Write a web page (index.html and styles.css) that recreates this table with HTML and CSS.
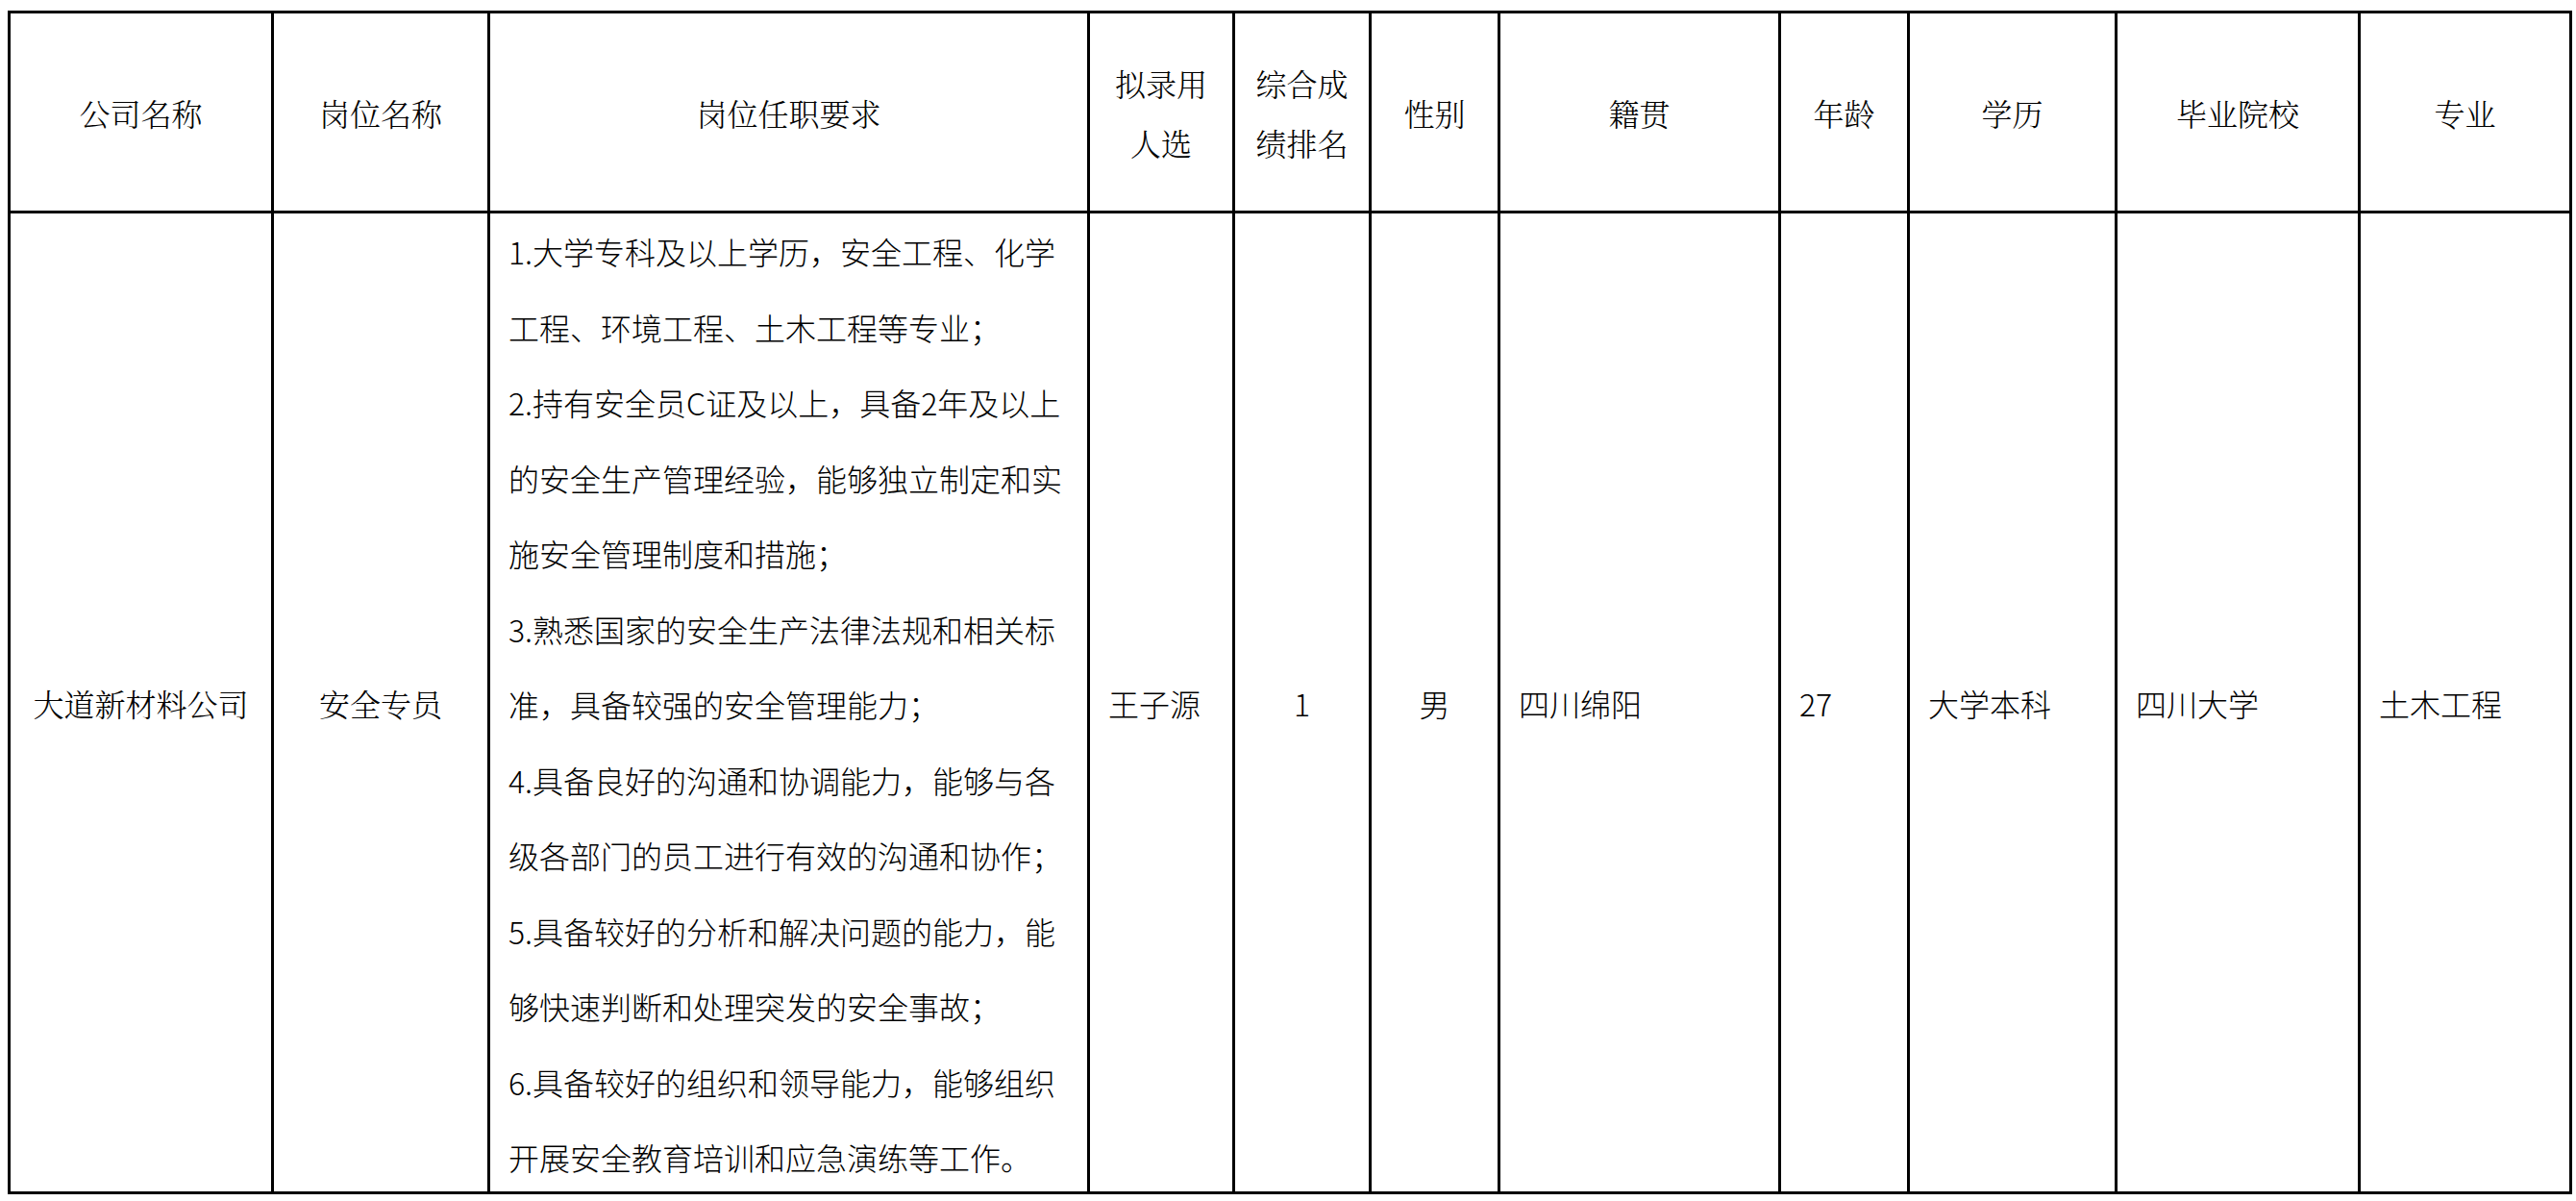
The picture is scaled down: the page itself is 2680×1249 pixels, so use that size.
FILE: index.html
```html
<!DOCTYPE html>
<html lang="zh-CN">
<head>
<meta charset="utf-8">
<title>拟录用人员名单</title>
<link rel="stylesheet" href="styles.css">
</head>
<body>
<div class="sheet">
  <div class="grid">
    <div class="cell head">公司名称</div>
    <div class="cell head">岗位名称</div>
    <div class="cell head">岗位任职要求</div>
    <div class="cell head two">拟录用<br>人选</div>
    <div class="cell head two">综合成<br>绩排名</div>
    <div class="cell head">性别</div>
    <div class="cell head">籍贯</div>
    <div class="cell head">年龄</div>
    <div class="cell head">学历</div>
    <div class="cell head">毕业院校</div>
    <div class="cell head">专业</div>

    <div class="cell serif center">大道新材料公司</div>
    <div class="cell serif center">安全专员</div>
    <div class="cell req">
      <p class="req-text">1.大学专科及以上学历，安全工程、化学<br>工程、环境工程、土木工程等专业；<br>2.持有安全员C证及以上，具备2年及以上<br>的安全生产管理经验，能够独立制定和实<br>施安全管理制度和措施；<br>3.熟悉国家的安全生产法律法规和相关标<br>准，具备较强的安全管理能力；<br>4.具备良好的沟通和协调能力，能够与各<br>级各部门的员工进行有效的沟通和协作；<br>5.具备较好的分析和解决问题的能力，能<br>够快速判断和处理突发的安全事故；<br>6.具备较好的组织和领导能力，能够组织<br>开展安全教育培训和应急演练等工作。</p>
    </div>
    <div class="cell sans left">王子源</div>
    <div class="cell sans center">1</div>
    <div class="cell sans center">男</div>
    <div class="cell sans left">四川绵阳</div>
    <div class="cell sans left">27</div>
    <div class="cell sans left">大学本科</div>
    <div class="cell sans left">四川大学</div>
    <div class="cell sans left">土木工程</div>
  </div>
</div>
</body>
</html>
```

FILE: styles.css
```css
html, body {
  margin: 0;
  padding: 0;
  background: #ffffff;
}

.sheet {
  padding: 11px 0 0 8px;
}

.grid {
  display: grid;
  grid-template-columns: 271px 222px 621px 148px 139px 131px 289px 131px 213px 250px 217px;
  grid-template-rows: 205px 1017px;
  gap: 3px;
  padding: 3px;
  background: #000000;
  width: max-content;
  color: #000000;
}

.cell {
  background: #ffffff;
  display: flex;
  align-items: center;
  font-size: 32px;
  line-height: 40px;
  font-weight: 300;
  white-space: nowrap;
  overflow: visible;
}

.head {
  justify-content: center;
  text-align: center;
  font-family: "Noto Serif CJK SC", "Noto Sans CJK SC", serif;
}

.head.two {
  line-height: 62px;
}

.serif {
  font-family: "Noto Serif CJK SC", "Noto Sans CJK SC", serif;
}

.sans {
  font-family: "Noto Sans CJK SC", sans-serif;
}

.center {
  justify-content: center;
}

.left {
  justify-content: flex-start;
  padding: 0 19px;
}

.req {
  align-items: flex-start;
  padding: 0 0 0 19px;
  font-family: "Noto Sans CJK SC", sans-serif;
}

.req-text {
  margin: 0;
  line-height: 78.5px;
}
```
